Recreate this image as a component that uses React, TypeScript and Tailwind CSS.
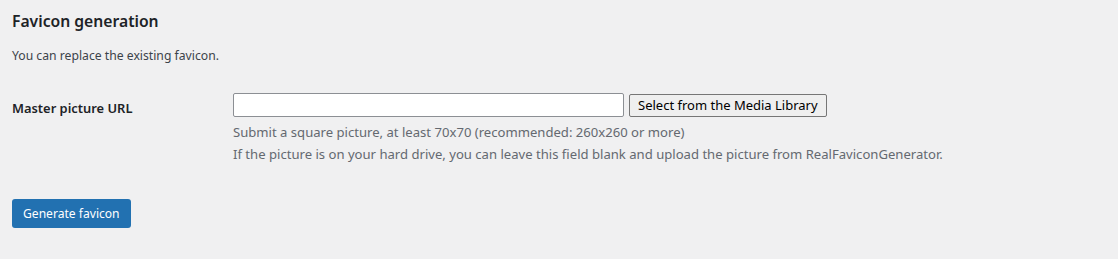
import React from "react";

export default function App() {
  return (
    <div className="min-h-[259px] w-full bg-[#f0f0f1] px-3 pt-[9px] text-[#3c434a] [font-family:'Noto_Sans',sans-serif]">
      <h2 className="text-[15.7px] font-semibold leading-[24px] text-[#1d2327]">Favicon generation</h2>
      <p className="mt-[14px] text-[12.2px] leading-[18px]">You can replace the existing favicon.</p>

      <div className="mt-[28px] flex">
        <div className="w-[221px] pt-[6px] text-[12.9px] font-semibold leading-[18px] text-[#1d2327]">
          Master picture URL
        </div>
        <div className="flex flex-col">
          <div className="flex items-center gap-[5px]">
            <input
              type="text"
              className="h-[24px] w-[391px] rounded-[2px] border border-[#8c8f94] bg-white px-2 text-[14px] outline-none"
            />
            <button className="h-[23px] rounded-[2px] border border-[#767676] bg-[#efefef] px-[8px] text-[13px] leading-[20px] text-black">
              Select from the Media Library
            </button>
          </div>
          <p className="mt-[4px] text-[13.1px] leading-[22px] text-[#646970]">
            Submit a square picture, at least 70x70 (recommended: 260x260 or more)
          </p>
          <p className="text-[13.1px] leading-[22px] text-[#646970]">
            If the picture is on your hard drive, you can leave this field blank and upload the picture from RealFaviconGenerator.
          </p>
        </div>
      </div>

      <button className="mt-[34px] h-[29px] rounded-[3px] bg-[#2271b1] px-[11px] text-[12.1px] leading-[27px] text-white">
        Generate favicon
      </button>
    </div>
  );
}
